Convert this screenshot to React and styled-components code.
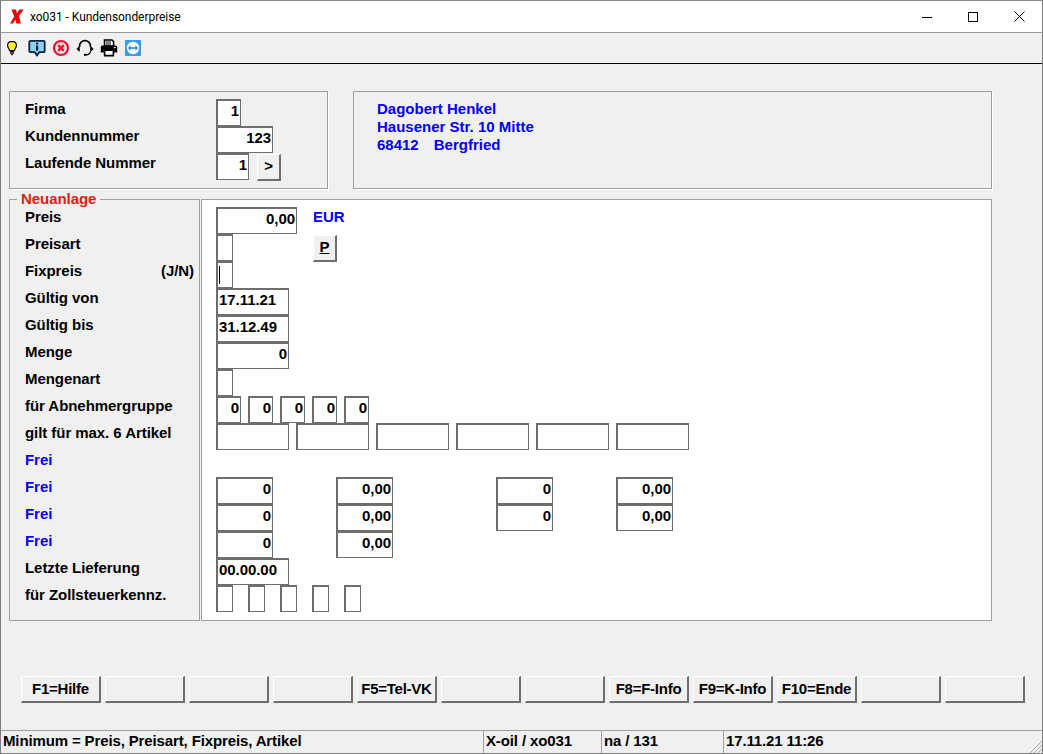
import React from "react";
import styled, { createGlobalStyle } from "styled-components";

const Global = createGlobalStyle`
  html, body { margin: 0; padding: 0; background: #f0f0f0; }
  * { box-sizing: border-box; }
`;

const Win = styled.div`
  width: 1043px; height: 754px; display: flex; flex-direction: column;
  border: 1px solid #7d7d7d; border-top-color: #8a8a8a; background: #f0f0f0; overflow: hidden;
  font-family: "Liberation Sans", Arial, sans-serif; font-size: 15px; font-weight: 700; letter-spacing: -0.06px; color: #000;
`;
const TitleBar = styled.div`
  height: 32px; flex: none; background: #fff; border-bottom: 1px solid #9a9a9a; display: flex; align-items: center; padding-left: 9px;
`;
const Title = styled.div`
  font-family: Roboto, sans-serif; font-weight: 400; font-size: 12px; letter-spacing: -0.05px; margin-left: 6px; flex: 1; color: #000;
`;
const WinBtn = styled.div`
  width: 46px; height: 31px; display: flex; align-items: center; justify-content: center;
`;
const Toolbar = styled.div`
  height: 31px; flex: none; display: flex; align-items: center; border-bottom: 1px solid #000;
`;
const Tool = styled.div`
  width: 24px; height: 30px; display: flex; align-items: center; justify-content: center;
`;
const Content = styled.div`
  flex: 1; padding: 27px 0 0 8px; display: flex; flex-direction: column;
`;
const TopRow = styled.div`
  display: flex; gap: 25px; height: 98px;
`;
const Panel = styled.div`
  border: 1px solid #a0a0a0; box-shadow: 1px 1px 0 #fff; height: 98px;
`;
const IdPanel = styled(Panel)`
  width: 319px; padding: 7px 0 0 15px;
`;
const AddrPanel = styled(Panel)`
  width: 639px; padding: 8px 0 0 23px; color: #0000ff; line-height: 18px; letter-spacing: 0;
`;
const AddrLine = styled.div`
  display: flex; gap: 15px; height: 18px;
`;
const IdRow = styled.div`
  display: flex; height: 27px;
`;
const Label = styled.div`
  width: ${p => p.$w || 191}px; height: 27px; line-height: 20px; flex: none; display: flex; justify-content: space-between;
  color: ${p => p.$blue ? "#0000ff" : "#000"}; padding-right: ${p => p.$pr || 0}px;
`;
const MainRow = styled.div`
  display: flex; gap: 1px; margin-top: 10px; height: 422px;
`;
const LeftPanel = styled.div`
  position: relative; width: 191px; height: 422px; border: 1px solid #a0a0a0; padding: 7px 0 0 15px;
`;
const Legend = styled.div`
  position: absolute; left: 7px; top: -10px; background: #f0f0f0; padding: 0 4px; line-height: 18px; color: #e0200f;
`;
const WhitePanel = styled.div`
  width: 791px; height: 422px; background: #fff; border: 1px solid #a0a0a0; padding: 7px 0 0 14px;
`;
const Row = styled.div`
  display: flex; height: 27px;
`;
const Field = styled.div`
  width: ${p => p.$w}px; height: 27px; margin-left: ${p => p.$ml || 0}px; flex: none; background: #fff;
  border: solid #6e6e6e; border-width: 2px 1px 1px 2px;
  display: flex; align-items: center; justify-content: ${p => p.$left ? "flex-start" : "flex-end"};
  padding: 0 1px 4px 1px; line-height: 20px;
`;
const Caret = styled.span`
  display: block; width: 1px; height: 18px; background: #000; margin: 3px 0 0 0;
`;
const Btn = styled.div`
  width: 24px; height: 27px; margin-left: ${p => p.$ml || 0}px; margin-top: ${p => p.$mt || 0}px; flex: none; background: #f0f0f0;
  border: solid; border-width: 1px 2px 2px 1px; border-color: #fff #6e6e6e #6e6e6e #fff;
  display: flex; align-items: center; justify-content: center; line-height: 20px; padding-bottom: 2px;
`;
const Underlined = styled.span`
  text-decoration: underline;
`;
const Unit = styled.div`
  margin-left: 16px; color: #0000ff; line-height: 20px;
`;
const Keys = styled.div`
  display: flex; gap: 4px; margin: 55px 0 0 12px;
`;
const Key = styled.div`
  width: 80px; height: 27px; flex: none; background: #f0f0f0;
  border: solid; border-width: 1px 2px 2px 1px; border-color: #fff #6e6e6e #6e6e6e #fff;
  display: flex; align-items: center; justify-content: center; line-height: 20px; padding-bottom: 1px; letter-spacing: -0.25px;
`;
const Status = styled.div`
  height: 23px; flex: none; display: grid; grid-template-columns: 482px 118px 122px 1fr; position: relative; letter-spacing: -0.13px;
`;
const Cell = styled.div`
  border-top: 1px solid #a0a0a0; border-left: ${p => p.$first ? "none" : "1px solid #a0a0a0"};
  padding-left: 2px; line-height: 20px; white-space: nowrap;
`;
const Grip = styled.svg`
  position: absolute; right: 0; bottom: 0;
`;

const Bulb = () => (
  <svg width="12" height="16" viewBox="0 0 14 18" style={{ marginLeft: -3 }}>
    <path d="M7 1.2C3.8 1.2 1.8 3.4 1.8 6c0 2.4 1.8 3.4 2.4 6h5.600c.6-2.600 2.400-3.600 2.400-6 0-2.600-2-4.800-5.200-4.800z" fill="#ffe83a" stroke="#111" strokeWidth="1.4" />
    <path d="M4.600 13.200h4.800M4.600 15h4.800M6 16.800h2" stroke="#111" strokeWidth="1.4" />
  </svg>
);
const Info = () => (
  <svg width="18" height="18" viewBox="0 0 18 18">
    <path d="M2.500 1.800h13a1.200 1.200 0 0 1 1.200 1.200v9a1.200 1.200 0 0 1-1.200 1.200h-4.200L9 16.400l-2.300-3.200H2.500A1.200 1.200 0 0 1 1.300 12V3a1.200 1.200 0 0 1 1.200-1.200z" fill="#8fd0ee" stroke="#0b2545" strokeWidth="1.8" />
    <rect x="8" y="3.600" width="2.200" height="2" fill="#0b2545" />
    <rect x="8" y="6.600" width="2.200" height="5" fill="#0b2545" />
  </svg>
);
const Stop = () => (
  <svg width="18" height="18" viewBox="0 0 18 18">
    <circle cx="9" cy="9" r="7" fill="#fbe3e6" stroke="#e8112d" strokeWidth="2.2" />
    <path d="M6.200 6.200l5.600 5.600M11.800 6.200l-5.600 5.600" stroke="#e8112d" strokeWidth="2.4" />
  </svg>
);
const Headset = () => (
  <svg width="18" height="18" viewBox="0 0 18 18" fill="none">
    <path d="M3.600 8V7a5.400 5.400 0 0 1 10.800 0v1" stroke="#000" strokeWidth="1.6" />
    <path d="M3.200 7.600 1 9.800l2.200 2.400z" fill="#000" stroke="#000" strokeWidth="1" />
    <path d="M14.800 7.600 17 9.800l-2.200 2.400z" fill="#000" stroke="#000" strokeWidth="1" />
    <path d="M14.600 12.400c-.6 2.400-2.400 3.400-4.800 3.400" stroke="#000" strokeWidth="1.300" />
    <rect x="8" y="14.800" width="2.400" height="2" fill="#000" />
  </svg>
);
const Printer = () => (
  <svg width="18" height="18" viewBox="0 0 18 18">
    <path d="M4.500 1h7.500l1.600 1.600V7h-9z" fill="#fff" stroke="#000" strokeWidth="1.600" />
    <path d="M6 3h5M6 5h5" stroke="#000" strokeWidth="1" />
    <path d="M2.400 6.500h13.200A1.600 1.600 0 0 1 17.200 8v5.600h-3V11H3.800v2.600h-3V8a1.600 1.600 0 0 1 1.600-1.500z" fill="#000" />
    <path d="M4.600 11.200h8.800v5.400H4.600z" fill="#fff" stroke="#000" strokeWidth="1.600" />
    <rect x="14" y="8" width="1.600" height="1.200" fill="#fff" />
  </svg>
);
const Team = () => (
  <svg width="16" height="16" viewBox="0 0 16 16">
    <rect width="16" height="16" fill="#3a9ce2" />
    <circle cx="8" cy="8" r="6.200" fill="#f4fbff" />
    <path d="M2.800 8 5.600 5.600v1.600h4.800V5.600L13.200 8l-2.800 2.400V8.800H5.600v1.600z" fill="#2a86cf" />
  </svg>
);
const Logo = () => (
  <svg width="14" height="15" viewBox="0 0 15 15">
    <path d="M1.500 0h5l1 4L10 0h4.600L9.600 7l2 8H6.800L6 10.600 3 15H0l4.600-7.400z" fill="#f00000" />
  </svg>
);

const labels = [
  ["Preis"], ["Preisart"], ["Fixpreis", "(J/N)"], ["Gültig von"], ["Gültig bis"], ["Menge"], ["Mengenart"],
  ["für Abnehmergruppe"], ["gilt für max. 6 Artikel"], ["Frei", null, true], ["Frei", null, true], ["Frei", null, true], ["Frei", null, true],
  ["Letzte Lieferung"], ["für Zollsteuerkennz."],
];
const keys = ["F1=Hilfe", "", "", "", "F5=Tel-VK", "", "", "F8=F-Info", "F9=K-Info", "F10=Ende", "", ""];

export default function App() {
  return (
    <Win>
      <Global />
      <TitleBar>
        <Logo />
        <Title>xo031 - Kundensonderpreise</Title>
        <WinBtn><svg width="10" height="10"><path d="M0 5.500h10" stroke="#000" /></svg></WinBtn>
        <WinBtn><svg width="10" height="10"><rect x=".5" y=".5" width="9" height="9" fill="none" stroke="#000" /></svg></WinBtn>
        <WinBtn><svg width="11" height="11"><path d="M.5.5l10 10M10.500.5l-10 10" stroke="#000" /></svg></WinBtn>
      </TitleBar>
      <Toolbar>
        <Tool><Bulb /></Tool><Tool><Info /></Tool><Tool><Stop /></Tool><Tool><Headset /></Tool><Tool><Printer /></Tool><Tool><Team /></Tool>
      </Toolbar>
      <Content>
        <TopRow>
          <IdPanel>
            <IdRow><Label>Firma</Label><Field $w={25}>1</Field></IdRow>
            <IdRow><Label>Kundennummer</Label><Field $w={57}>123</Field></IdRow>
            <IdRow><Label>Laufende Nummer</Label><Field $w={33}>1</Field><Btn $ml={8} $mt={1}>&gt;</Btn></IdRow>
          </IdPanel>
          <AddrPanel>
            <AddrLine>Dagobert Henkel</AddrLine>
            <AddrLine>Hausener Str. 10 Mitte</AddrLine>
            <AddrLine><span>68412</span><span>Bergfried</span></AddrLine>
          </AddrPanel>
        </TopRow>
        <MainRow>
          <LeftPanel>
            <Legend>Neuanlage</Legend>
            {labels.map(([a, b, blue], i) => (
              <Label key={i} $w={174} $pr={5} $blue={blue}><span>{a}</span>{b && <span>{b}</span>}</Label>
            ))}
          </LeftPanel>
          <WhitePanel>
            <Row><Field $w={81}>0,00</Field><Unit>EUR</Unit></Row>
            <Row><Field $w={17} /><Btn $ml={80} $mt={1}><Underlined>P</Underlined></Btn></Row>
            <Row><Field $w={17} $left><Caret /></Field></Row>
            <Row><Field $w={73} $left>17.11.21</Field></Row>
            <Row><Field $w={73} $left>31.12.49</Field></Row>
            <Row><Field $w={73}>0</Field></Row>
            <Row><Field $w={17} /></Row>
            <Row>{[0, 7, 7, 7, 7].map((m, i) => <Field key={i} $w={25} $ml={m}>0</Field>)}</Row>
            <Row>{[0, 7, 7, 7, 7, 7].map((m, i) => <Field key={i} $w={73} $ml={m} />)}</Row>
            <Row />
            <Row><Field $w={57}>0</Field><Field $w={57} $ml={63}>0,00</Field><Field $w={57} $ml={103}>0</Field><Field $w={57} $ml={63}>0,00</Field></Row>
            <Row><Field $w={57}>0</Field><Field $w={57} $ml={63}>0,00</Field><Field $w={57} $ml={103}>0</Field><Field $w={57} $ml={63}>0,00</Field></Row>
            <Row><Field $w={57}>0</Field><Field $w={57} $ml={63}>0,00</Field></Row>
            <Row><Field $w={73} $left>00.00.00</Field></Row>
            <Row>{[0, 15, 15, 15, 15].map((m, i) => <Field key={i} $w={17} $ml={m} />)}</Row>
          </WhitePanel>
        </MainRow>
        <Keys>{keys.map((k, i) => <Key key={i}>{k}</Key>)}</Keys>
      </Content>
      <Status>
        <Cell $first>Minimum = Preis, Preisart, Fixpreis, Artikel</Cell>
        <Cell>X-oil / xo031</Cell>
        <Cell>na / 131</Cell>
        <Cell>17.11.21 11:26</Cell>
        <Grip width="14" height="14"><path d="M2 14L14 2M6 14l8-8M10 14l4-4" stroke="#a8a8a8" /></Grip>
      </Status>
    </Win>
  );
}
